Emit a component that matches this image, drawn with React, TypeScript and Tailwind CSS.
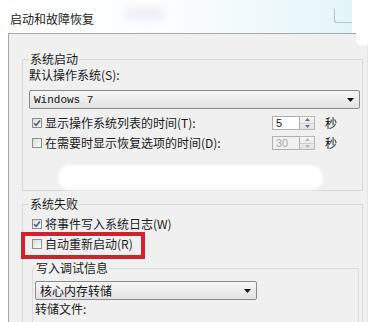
import React from "react";

const CJK = "font-['Noto_Sans_CJK_SC','Microsoft_YaHei',sans-serif]";

function CheckBox({ checked }: { checked?: boolean }) {
  return (
    <span className="flex h-[10px] w-[10px] shrink-0 items-center justify-center border border-[#8e8f8f] bg-gradient-to-br from-[#dcdcdc] to-[#fbfbfb]">
      {checked && (
        <svg width="8" height="8" viewBox="0 0 8 8">
          <path d="M1 4.2 L3.1 6.3 L7 1.4" fill="none" stroke="#4a5d8c" strokeWidth="1.6" />
        </svg>
      )}
    </span>
  );
}

function Spinner({ value, disabled }: { value: string; disabled?: boolean }) {
  return (
    <div className="flex h-[14px]">
      <div
        className={`flex w-[28px] items-center border border-[#b0b0b0] pl-[3px] font-['Liberation_Sans',sans-serif] text-[11px] ${
          disabled ? "bg-[#f0f0f0] text-[#a8a8a8]" : "bg-white text-[#1a1a1a]"
        }`}
      >
        {value}
      </div>
      <div className="flex w-[15px] flex-col border border-l-0 border-[#b8b8b8] bg-gradient-to-b from-[#f6f6f6] to-[#e2e2e2]">
        <div className="flex flex-1 items-center justify-center border-b border-[#cfcfcf]">
          <svg width="5" height="3" viewBox="0 0 5 3">
            <path d="M0 3 L2.5 0 L5 3 Z" fill={disabled ? "#b0b8c8" : "#5b6e94"} />
          </svg>
        </div>
        <div className="flex flex-1 items-center justify-center">
          <svg width="5" height="3" viewBox="0 0 5 3">
            <path d="M0 0 L2.5 3 L5 0 Z" fill={disabled ? "#b0b8c8" : "#5b6e94"} />
          </svg>
        </div>
      </div>
    </div>
  );
}

function Combo({ label, width, mono }: { label: string; width: string; mono?: boolean }) {
  return (
    <div
      className={`flex h-[19px] items-center justify-between rounded-[2px] border border-[#8b8b8b] bg-gradient-to-b from-[#f7f7f7] to-[#e2e2e2] pl-[4px] pr-[5px] ${width}`}
    >
      <span
        className={
          mono
            ? "font-['Liberation_Mono',monospace] text-[11px] text-[#111]"
            : `${CJK} text-[12px] text-[#111]`
        }
      >
        {label}
      </span>
      <svg width="7" height="4" viewBox="0 0 7 4">
        <path d="M0 0 L7 0 L3.5 4 Z" fill="#111" />
      </svg>
    </div>
  );
}

export default function App() {
  return (
    <div className={`relative h-[322px] w-[392px] overflow-hidden bg-white ${CJK} text-[12px] leading-[14px] text-[#1a1a1a]`}>
      {/* title bar */}
      <div className="relative h-[33px] w-[352px] bg-gradient-to-r from-white via-[#fbfdfe] to-[#e3f5f9]">
        <div className="absolute left-[125px] top-[9px] h-[10px] w-[40px] rounded-full bg-[#eeeaf6] blur-[5px]" />
        <div className="relative pl-[10px] pt-[12px] text-[12px] text-[#222]">启动和故障恢复</div>
        <div className="absolute left-[334px] top-[9px] h-[14px] w-[18px] rounded-bl-[3px] border-b border-l border-[#b9c2c8]" />
      </div>

      {/* dialog body */}
      <div className="ml-[8px] w-[360px] border-l border-t border-r border-[#a3a9ad] border-r-[#e6e6e6] bg-[#f0f0f0] pb-[20px] pl-[13px] pr-[5px] pt-[18px]">
        <fieldset className="w-[341px] border border-[#d9d9d9] pl-[6px] pr-[2px]">
          <legend className="px-[1px]">系统启动</legend>
          <div className="pt-[2px]">默认操作系统(S):</div>
          <div className="mt-[8px]">
            <Combo label="Windows 7" width="w-[331px]" mono />
          </div>
          <div className="mt-[6px] flex h-[16px] items-center pl-[3px]">
            <CheckBox checked />
            <span className="ml-[3px] w-[227px]">显示操作系统列表的时间(T):</span>
            <Spinner value="5" />
            <span className="ml-[10px]">秒</span>
          </div>
          <div className="mt-[4px] flex h-[16px] items-center pl-[3px]">
            <CheckBox />
            <span className="ml-[3px] w-[227px]">在需要时显示恢复选项的时间(D):</span>
            <Spinner value="30" disabled />
            <span className="ml-[10px]">秒</span>
          </div>
          <div className="ml-[29px] mt-[14px] h-[25px] w-[265px] rounded-full bg-white blur-[1px]" />
        </fieldset>

        <fieldset className="mt-[6px] w-[341px] border border-[#d9d9d9] pl-[6px] pr-[2px]">
          <legend className="px-[1px]">系统失败</legend>
          <div className="mt-[5px] flex h-[16px] items-center pl-[3px]">
            <CheckBox checked />
            <span className="ml-[3px]">将事件写入系统日志(W)</span>
          </div>
          <div className="mt-[4px] flex h-[16px] items-center pl-[3px]">
            <CheckBox />
            <span className="ml-[3px]">自动重新启动(R)</span>
          </div>
          <fieldset className="ml-[3px] mt-[9px] w-[327px] border border-[#dcdcdc] pl-[2px]">
            <legend className="px-[1px]">写入调试信息</legend>
            <div className="mt-[6px]">
              <Combo label="核心内存转储" width="w-[222px]" />
            </div>
            <div className="mt-[2px]">转储文件:</div>
            <div className="mt-[6px] h-[20px] w-[225px] border border-[#b0b0b0] bg-white" />
          </fieldset>
        </fieldset>
      </div>

      {/* right frame tab */}
      <div className="absolute left-[356px] top-0 h-[46px] w-[14px] rounded-b-[6px] bg-white" />

      {/* red annotation */}
      <div className="absolute left-[21px] top-[232px] h-[27px] w-[124px] border-[4px] border-[#d2202c]" />
    </div>
  );
}
